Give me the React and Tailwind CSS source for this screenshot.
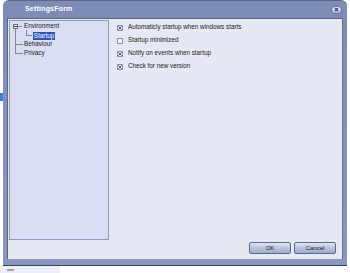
import React from "react";

function Check({ checked }) {
  return (
    <div className="w-[6px] h-[6px] border border-[#8a93b0] bg-[#f4f5fa] flex items-center justify-center">
      {checked && (
        <svg width="4" height="4" viewBox="0 0 4 4">
          <path d="M0.3 0.3 L3.7 3.7 M3.7 0.3 L0.3 3.7" stroke="#2a3f8f" strokeWidth="0.9" />
        </svg>
      )}
    </div>
  );
}

function Row({ checked, label }) {
  return (
    <div className="flex items-center h-[13px] gap-[5px]">
      <Check checked={checked} />
      <span className="text-[6.3px] text-[#1a1a1a] leading-none">{label}</span>
    </div>
  );
}

export default function App() {
  return (
    <div
      className="relative w-[350px] h-[273px] bg-white overflow-hidden"
      style={{ fontFamily: '"Liberation Sans", Arial, sans-serif' }}
    >
      <div className="absolute left-0 top-[93px] w-[3px] h-[8px] bg-[#3a7ee0]" />
      <div className="absolute left-0 top-[266px] w-[60px] h-[7px] bg-[#eceef8]" />
      <div className="absolute left-[7px] top-[269px] w-[7px] h-[2px] bg-[#a0a4b0]" />
      <div className="ml-[3px] w-[344px] h-[266px] rounded-t-[6px] bg-gradient-to-b from-[#7d8cb6] to-[#8a98c0] border-t border-[#5c6788] flex flex-col">
        <div className="h-[17px] flex items-center justify-between pl-[22px] pr-[5px]">
          <span className="text-[7px] font-bold text-white tracking-[0.2px]">SettingsForm</span>
          <div className="w-[11px] h-[8px] rounded-full bg-gradient-to-b from-[#e8ecf8] to-[#aab6da] border border-[#6c7aa4] flex items-center justify-center">
            <svg width="5" height="5" viewBox="0 0 5 5">
              <path d="M1 1 L4 4 M4 1 L1 4" stroke="#2d3e7a" strokeWidth="1.1" />
            </svg>
          </div>
        </div>
        <div className="mx-[4px] flex-1 bg-[#e6e8f3] border-l border-t border-[#5f6576] border-r border-r-[#6a7080] flex flex-col">
          <div className="flex flex-1 pl-[1px] pt-[1px]">
            <div className="w-[100px] h-[220px] bg-[#d9def5] border border-[#8f99b8] relative">
              <div className="absolute left-[3px] top-[3px] w-[5px] h-[5px] border border-[#6c6c6c] bg-white flex items-center justify-center">
                <div className="w-[3px] h-[1px] bg-[#333]" />
              </div>
              <div className="absolute left-[8px] top-[5px] w-[4px] h-[1px] bg-[#8a8a8a]" />
              <div className="absolute left-[5px] top-[8px] w-[1px] h-[25px] bg-[#8a8a8a]" />
              <div className="absolute left-[5px] top-[23px] w-[8px] h-[1px] bg-[#8a8a8a]" />
              <div className="absolute left-[5px] top-[32px] w-[8px] h-[1px] bg-[#8a8a8a]" />
              <div className="absolute left-[16px] top-[9px] w-[1px] h-[6px] bg-[#8a8a8a]" />
              <div className="absolute left-[16px] top-[14px] w-[6px] h-[1px] bg-[#8a8a8a]" />
              <div className="absolute left-[14px] top-[2px] text-[6.3px] leading-none text-[#1a1a1a]">Environment</div>
              <div className="absolute left-[23px] top-[11px] h-[8px] w-[22px] bg-[#2e55b0] text-white text-[6.3px] leading-none flex items-center justify-center">
                Startup
              </div>
              <div className="absolute left-[14px] top-[20px] text-[6.3px] leading-none text-[#1a1a1a]">Behaviour</div>
              <div className="absolute left-[14px] top-[29px] text-[6.3px] leading-none text-[#1a1a1a]">Privacy</div>
            </div>
            <div className="pl-[8px] pt-[1px] flex flex-col">
              <Row checked label="Automaticly startup when windows starts" />
              <Row checked={false} label="Startup minimized" />
              <Row checked label="Notify on events when startup" />
              <Row checked label="Check for new version" />
            </div>
          </div>
          <div className="flex justify-end gap-[3px] pr-[6px] pb-[5px] relative">
            <button className="w-[42px] h-[12px] rounded-[2px] border border-[#5d6a90] bg-gradient-to-b from-[#dfe4f2] via-[#b9c3dd] to-[#9eaacb] text-[6px] text-[#1a1a1a] leading-none">
              OK
            </button>
            <button className="w-[42px] h-[12px] rounded-[2px] border border-[#5d6a90] bg-gradient-to-b from-[#dfe4f2] via-[#b9c3dd] to-[#9eaacb] text-[6px] text-[#1a1a1a] leading-none">
              Cancel
            </button>
          </div>
        </div>
        <div className="h-[7px] border-b border-[#3e4458]" />
      </div>
    </div>
  );
}
